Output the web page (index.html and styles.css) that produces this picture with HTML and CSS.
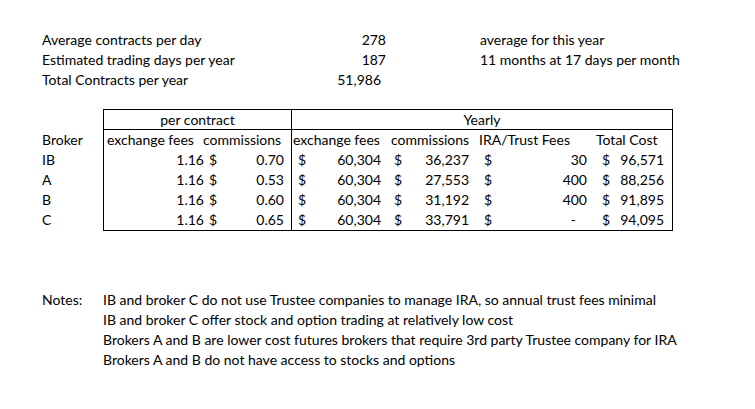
FILE: index.html
```html
<!DOCTYPE html>
<html>
<head>
<meta charset="utf-8">
<link rel="stylesheet" href="styles.css">
</head>
<body>
<div class="sheet">
  <div class="row">
    <div class="c lbl wide">Average contracts per day</div>
    <div class="c num pr3">278</div>
    <div class="c"></div>
    <div class="c lbl note-r">average for this year</div>
  </div>
  <div class="row">
    <div class="c lbl wide">Estimated trading days per year</div>
    <div class="c num pr3">187</div>
    <div class="c"></div>
    <div class="c lbl note-r">11 months at 17 days per month</div>
  </div>
  <div class="row">
    <div class="c lbl wide">Total Contracts per year</div>
    <div class="c num pr8">51,986</div>
  </div>
  <div class="spacer"></div>

  <div class="row head-group">
    <div class="c"></div>
    <div class="c grp grp-left">per contract</div>
    <div class="c grp grp-right">Yearly</div>
  </div>
  <div class="row">
    <div class="c lbl">Broker</div>
    <div class="c hd bl">exchange fees</div>
    <div class="c hd br shift">commissions</div>
    <div class="c hd hd1">exchange fees</div>
    <div class="c hd">commissions</div>
    <div class="c hd">IRA/Trust Fees</div>
    <div class="c hd br">Total Cost</div>
  </div>
  <div class="row">
    <div class="c lbl">IB</div>
    <div class="c num bl pr3">1.16</div>
    <div class="c acc br accC"><span>$</span><span>0.70</span></div>
    <div class="c acc accD"><span>$</span><span>60,304</span></div>
    <div class="c acc accE"><span>$</span><span>36,237</span></div>
    <div class="c acc accF"><span>$</span><span>30</span></div>
    <div class="c acc br accG"><span>$</span><span>96,571</span></div>
  </div>
  <div class="row">
    <div class="c lbl">A</div>
    <div class="c num bl pr3">1.16</div>
    <div class="c acc br accC"><span>$</span><span>0.53</span></div>
    <div class="c acc accD"><span>$</span><span>60,304</span></div>
    <div class="c acc accE"><span>$</span><span>27,553</span></div>
    <div class="c acc accF"><span>$</span><span>400</span></div>
    <div class="c acc br accG"><span>$</span><span>88,256</span></div>
  </div>
  <div class="row">
    <div class="c lbl">B</div>
    <div class="c num bl pr3">1.16</div>
    <div class="c acc br accC"><span>$</span><span>0.60</span></div>
    <div class="c acc accD"><span>$</span><span>60,304</span></div>
    <div class="c acc accE"><span>$</span><span>31,192</span></div>
    <div class="c acc accF"><span>$</span><span>400</span></div>
    <div class="c acc br accG"><span>$</span><span>91,895</span></div>
  </div>
  <div class="row last">
    <div class="c lbl">C</div>
    <div class="c num bl pr3 bb">1.16</div>
    <div class="c acc br bb accC"><span>$</span><span>0.65</span></div>
    <div class="c acc bb accD"><span>$</span><span>60,304</span></div>
    <div class="c acc bb accE"><span>$</span><span>33,791</span></div>
    <div class="c acc bb accF dash"><span>$</span><span>-</span></div>
    <div class="c acc br bb accG"><span>$</span><span>94,095</span></div>
  </div>

  <div class="spacer3"></div>

  <div class="row notes">
    <div class="c lbl">Notes:</div>
    <div class="c note">IB and broker C do not use Trustee companies to manage IRA, so annual trust fees minimal</div>
  </div>
  <div class="row notes">
    <div class="c"></div>
    <div class="c note">IB and broker C offer stock and option trading at relatively low cost</div>
  </div>
  <div class="row notes">
    <div class="c"></div>
    <div class="c note">Brokers A and B are lower cost futures brokers that require 3rd party Trustee company for IRA</div>
  </div>
  <div class="row notes">
    <div class="c"></div>
    <div class="c note">Brokers A and B do not have access to stocks and options</div>
  </div>
</div>
</body>
</html>
```

FILE: styles.css
```css
html, body {
  margin: 0;
  padding: 0;
  background: #ffffff;
}

.sheet {
  padding: 30px 0 0 39px;
  font-family: Lato, "Open Sans", sans-serif;
  font-size: 14px;
  color: #000000;
  width: 716px;
  box-sizing: border-box;
}

.row {
  display: grid;
  grid-template-columns: 64px 104px 85px 97px 88px 117px 79px;
  height: 20px;
  line-height: 20px;
}

.c {
  box-sizing: border-box;
  white-space: nowrap;
  min-width: 0;
}

.lbl {
  padding-left: 3px;
}

.wide {
  grid-column: 1 / 4;
}

.note-r {
  grid-column: 6 / 8;
  padding-left: 3px;
}

.num {
  text-align: right;
}

.pr3 {
  padding-right: 3px;
}

.pr8 {
  padding-right: 8px;
}

.spacer {
  height: 19px;
}

.spacer3 {
  height: 60px;
}

.head-group {
  grid-template-columns: 64px 189px 381px;
  height: 21px;
  line-height: 19px;
}

.grp {
  text-align: center;
  border-top: 1px solid #000;
  border-bottom: 1px solid #000;
  border-right: 1px solid #000;
}

.grp-left {
  border-left: 1px solid #000;
}

.bl {
  border-left: 1px solid #000;
}

.br {
  border-right: 1px solid #000;
}

.bb {
  border-bottom: 1px solid #000;
}

.hd {
  padding-left: 2px;
}

.bl.hd {
  padding-left: 3px;
}

.hd1 {
  padding-left: 1px;
}

.shift {
  padding-left: 0;
  margin-left: -4px;
}

.acc {
  display: flex;
  justify-content: space-between;
}

.accC {
  padding-left: 2px;
  padding-right: 7px;
}

.accD {
  padding-left: 6px;
  padding-right: 8px;
}

.accE {
  padding-left: 5px;
  padding-right: 8px;
}

.accF {
  padding-left: 7px;
  padding-right: 7px;
}

.accF.dash {
  padding-right: 18px;
}

.accG {
  padding-left: 8px;
  padding-right: 8px;
}

.note {
  grid-column: 2 / 8;
}
```
